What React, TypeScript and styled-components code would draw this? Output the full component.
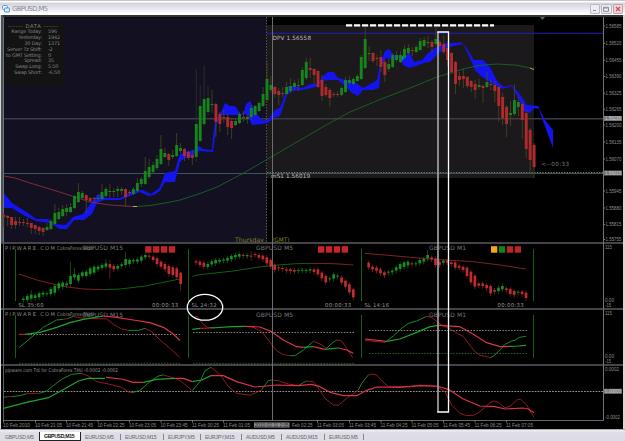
import styled, { createGlobalStyle } from 'styled-components';

const GlobalStyle = createGlobalStyle`
  * {
    box-sizing: border-box;
  }

  body {
    margin: 0;
    overflow: hidden;
    background-color: #dddce4;
    font-family: 'DejaVu Sans', sans-serif;
  }
`;

const Window = styled.div`
  display: flex;
  flex-direction: column;
  width: 625px;
  height: 441px;
  overflow: hidden;
`;

const TitleBar = styled.header`
  display: flex;
  align-items: center;
  height: 15px;
  padding: 1px 2px 0;
  border-top: 1px solid #c6c3ca;
  background: linear-gradient(#fff 0 1px, #d3d3df 2px, #e4e4eb 7px, #fdfdff 12px, #fff);
`;

const Title = styled.h1`
  flex: 1;
  margin: 0 0 0 2px;
  color: #8b8b8d;
  font: 6.8px 'DejaVu Sans', sans-serif;
  letter-spacing: -0.6px;
`;

const WindowButtons = styled.div`
  display: flex;
  gap: 1px;
`;

const WindowButton = styled.button<{ $close?: boolean }>`
  display: grid;
  place-items: center;
  width: 10.5px;
  height: 10px;
  padding: 0;
  border: 1px solid ${(props) => (props.$close ? '#c99ba4' : '#b9b9c6')};
  border-radius: 1px;
  color: ${(props) => (props.$close ? '#c0505c' : '#8c8c99')};
  background-color: ${(props) => (props.$close ? '#efd5da' : '#ececf2')};
`;

const Workspace = styled.main`
  position: relative;
  display: flex;
  flex-direction: column;
  height: 414px;
  border: solid #d6d5da;
  border-width: 0 2px 0 1px;
  background-color: #000;
`;

const Pane = styled.svg`
  display: block;
  flex: none;
  width: 622px;
`;

const Annotations = styled.svg`
  position: absolute;
  top: 0;
  left: 0;
  width: 622px;
  height: 414px;
`;

const DataBox = styled.section`
  position: absolute;
  top: 8px;
  left: 4px;
  width: 59px;
  height: 63px;
  color: #858583;
  background-color: #131313;
  font-size: 4.9px;
  line-height: 5.9px;
  letter-spacing: -0.15px;
`;

const DataTitle = styled.h2`
  margin: 0 0 0 3px;
  font-size: 5.2px;
  font-weight: 400;
  line-height: 6px;
  letter-spacing: 0.65px;
  white-space: nowrap;
`;

const DataRow = styled.div`
  display: grid;
  grid-template-columns: 37px 1fr;
  column-gap: 6px;
  height: 5.9px;
  white-space: nowrap;

  span:first-child {
    justify-self: end;
  }
`;

const TabBar = styled.nav`
  display: flex;
  height: 12px;
  padding: 2px 0 1px 3px;
  border-top: 1px solid #aaa9ad;
  background: linear-gradient(#eeedf2, #dedde5 3px);
`;

const Tab = styled.div<{ $width: number; $active?: boolean; $plain?: boolean }>`
  display: flex;
  align-items: center;
  justify-content: space-between;
  width: ${(props) => props.$width}px;
  height: 9px;
  padding-left: ${(props) => (props.$plain ? 2 : 4)}px;
  border: ${(props) => (props.$active ? '1px solid #222' : 'none')};
  border-top: none;
  color: ${(props) => (props.$active ? '#111' : '#656467')};
  background-color: ${(props) => (props.$active ? '#fff' : 'transparent')};
  font-family: 'Liberation Sans', sans-serif;
  font-size: 5.2px;
  font-weight: ${(props) => (props.$active ? 700 : 400)};
  letter-spacing: ${(props) => (props.$active ? '-0.35px' : '-0.2px')};
  white-space: nowrap;

  &::after {
    content: '';
    width: 1px;
    height: 6px;
    background-color: ${(props) => (props.$plain || props.$active ? 'transparent' : '#858489')};
  }
`;

const dataRows = [
  ['Range Today:', '596'],
  ['Yesterday:', '1942'],
  ['30 Day:', '1371'],
  ['Server Tz Shift:', '-2'],
  ['to GMT Setting:', '0'],
  ['Spread:', '35'],
  ['Swap Long:', '5.50'],
  ['Swap Short:', '-6.50']
];

const tabs = [
  { name: 'GBPUSD,M5', width: 36, plain: true },
  { name: 'GBPUSD,M15', width: 42, active: true },
  { name: 'EURUSD,M5', width: 40 },
  { name: 'EURUSD,M15', width: 43 },
  { name: 'EURJPY,M5', width: 37 },
  { name: 'EURJPY,M15', width: 41 },
  { name: 'AUDUSD,M5', width: 40 },
  { name: 'AUDUSD,M15', width: 43 },
  { name: 'EURUSD,M5', width: 39 }
];

const UP = '#16851b';
const DOWN = '#b02a2d';
const GREEN = '#20a32a';
const RED = '#b01e22';
const CRIMSON = '#d8354a';

// direction, high, top, bottom, low
type Bar = [number, number, number, number, number];

const mainBars: Bar[] = [
  [0, 213, 215, 217, 227], [0, 215, 216, 218, 226], [0, 217, 217, 225, 229], [0, 217, 221, 225, 229],
  [0, 217, 222, 223, 226], [0, 219, 222, 223, 226], [0, 218, 223, 224, 227], [0, 223, 223, 228, 234],
  [0, 225, 225, 229, 234], [0, 226, 227, 231, 235], [0, 227, 228, 232, 236], [1, 223, 227, 230, 231],
  [1, 219, 221, 229, 230], [1, 204, 213, 224, 225], [1, 208, 212, 219, 220], [1, 205, 209, 216, 217],
  [1, 204, 208, 212, 216], [1, 203, 207, 212, 213], [1, 195, 196, 208, 209], [1, 183, 192, 202, 203],
  [1, 191, 193, 198, 199], [0, 195, 195, 200, 213], [0, 197, 198, 201, 202], [0, 197, 198, 199, 202],
  [1, 194, 198, 199, 200], [1, 184, 192, 199, 200], [1, 187, 189, 196, 197], [1, 184, 191, 192, 198],
  [1, 188, 191, 192, 197], [1, 186, 189, 191, 197], [1, 187, 189, 191, 195], [0, 188, 189, 197, 207],
  [0, 190, 192, 193, 196], [1, 187, 189, 194, 195], [1, 178, 183, 191, 192], [1, 177, 179, 184, 187],
  [1, 157, 171, 184, 185], [1, 159, 167, 177, 179], [1, 162, 165, 172, 173], [1, 155, 159, 168, 170],
  [1, 135, 149, 164, 165], [1, 148, 153, 157, 158], [0, 153, 154, 160, 166], [1, 150, 155, 157, 159],
  [1, 133, 145, 156, 157], [1, 143, 148, 151, 153], [0, 148, 149, 156, 161], [0, 151, 152, 158, 160],
  [0, 150, 155, 158, 165], [1, 69, 124, 157, 162], [1, 85, 106, 141, 142], [1, 65, 99, 124, 126],
  [1, 86, 98, 112, 115], [1, 90, 104, 105, 113], [0, 103, 104, 122, 137], [0, 112, 114, 124, 132],
  [0, 110, 117, 118, 123], [0, 114, 117, 127, 135], [0, 119, 121, 128, 139], [1, 119, 121, 125, 126],
  [1, 112, 114, 123, 124], [0, 111, 117, 118, 122], [1, 114, 117, 119, 124], [1, 105, 108, 117, 120],
  [1, 105, 106, 115, 116], [1, 101, 103, 111, 112], [1, 87, 94, 106, 107], [1, 62, 79, 100, 101],
  [1, 76, 85, 90, 92], [0, 86, 87, 94, 97], [0, 88, 91, 95, 105], [0, 87, 93, 94, 97],
  [1, 82, 87, 94, 95], [1, 78, 86, 91, 93], [1, 80, 83, 87, 90], [1, 79, 85, 86, 91],
  [1, 67, 70, 85, 86], [1, 58, 62, 78, 80], [0, 58, 68, 70, 78], [0, 68, 69, 75, 84],
  [0, 70, 71, 87, 88], [0, 75, 80, 96, 101], [0, 84, 87, 95, 97], [0, 88, 90, 98, 107],
  [0, 92, 94, 95, 97], [0, 91, 94, 95, 97], [1, 86, 88, 95, 96], [1, 77, 80, 92, 93],
  [1, 76, 80, 83, 85], [1, 77, 79, 84, 85], [1, 74, 76, 81, 82], [1, 55, 57, 79, 80],
  [1, 27, 39, 68, 69], [1, 46, 53, 54, 61], [0, 52, 53, 61, 63], [0, 55, 58, 59, 66],
  [0, 50, 57, 67, 72], [0, 60, 62, 75, 82], [1, 59, 64, 69, 72], [1, 53, 55, 67, 68],
  [1, 51, 55, 60, 62], [1, 51, 55, 62, 63], [1, 45, 49, 58, 59], [1, 44, 48, 53, 55],
  [0, 47, 50, 51, 56], [1, 45, 47, 52, 53], [1, 38, 41, 50, 51], [1, 37, 40, 46, 47],
  [1, 36, 42, 43, 48], [0, 40, 42, 47, 53], [1, 27, 39, 44, 46], [0, 40, 42, 46, 50],
  [0, 35, 44, 52, 54], [0, 41, 48, 60, 66], [0, 52, 53, 72, 74], [0, 61, 62, 84, 94],
  [0, 72, 76, 80, 86], [0, 68, 76, 79, 88], [0, 76, 77, 86, 88], [0, 80, 81, 87, 92],
  [0, 80, 84, 90, 99], [1, 79, 85, 87, 89], [0, 84, 86, 88, 103], [1, 72, 82, 87, 88],
  [0, 80, 84, 85, 90], [0, 81, 85, 91, 102], [0, 85, 87, 106, 122], [0, 93, 97, 118, 125],
  [0, 105, 107, 124, 137], [1, 101, 113, 115, 126], [1, 84, 100, 114, 116], [1, 97, 102, 107, 116],
  [0, 102, 104, 120, 139], [0, 110, 113, 149, 158], [0, 128, 130, 160, 172], [0, 143, 145, 167, 178]
];

const cloud =
  '4,193 12,203 20,208 28,213 36,219 48,219 54,224 66,225 73,217 83,214 91,203 97,195 101,194 106,198 120,198 132,191 143,190 151,194 158,189 160,187 165,173 175,171 178,160 180,154 188,151 194,150 199,146 203,149 212,150 213,136 215,122 222,110 225,103 230,106 234,106 237,108 240,115 244,112 246,104 250,101 253,107 257,114 262,120 268,120 275,110 280,108 288,86 294,86 302,88 311,84 318,84 322,77 328,72 334,72 338,78 347,80 355,82 363,88 374,82 377,80 380,64 385,51 389,49 394,55 403,56 410,53 414,62 422,60 428,53 435,48 445,43 456,43 461,42 466,47 474,60 483,60 490,67 497,81 504,87 512,85 519,93 527,105 538,106 545,120 553,130 553,148 543,121 539,109 534,108 530,113 524,111 520,102 512,86 503,89 491,83 481,76 475,70 470,58 463,44 450,47 440,52 434,58 430,62 424,63 416,66 409,68 403,65 400,58 393,60 386,58 381,67 379,88 373,90 363,90 358,96 352,93 347,88 338,80 330,80 322,81 316,87 302,90 292,91 287,95 280,116 274,118 268,123 262,124 252,125 247,114 240,115 222,115 217,122 213,152 199,151 191,157 185,158 180,162 175,182 165,182 160,191 154,195 148,196 140,192 130,196 120,200 104,200 97,203 92,214 84,220 74,220 67,229 60,229 50,223 36,221 27,217 18,212 12,208 4,208';

const SERIES_STEP = 11.8;

// Indicator bars are kept in plot units, three to a pixel: direction, top, bottom, high, low
type MiniBar = [number, number, number, number?, number?];

const m15Bars: MiniBar[] = [
  [1, 176, 180], [1, 168, 180], [1, 164, 176, 150], [1, 166, 174], [1, 160, 172], [1, 158, 164], [1, 160, 162],
  [1, 147, 162], [1, 138, 158], [1, 130, 145], [1, 128, 140], [1, 130, 136], [1, 108, 132, 65], [1, 103, 112, 85],
  [1, 105, 122], [1, 97, 108], [1, 95, 108], [1, 85, 102], [1, 80, 98], [1, 80, 88], [1, 75, 84],
  [1, 70, 80, 58], [0, 72, 83, 60, 115], [0, 78, 88], [1, 78, 86], [1, 73, 78], [1, 57, 75, 36], [1, 60, 72],
  [1, 60, 64], [1, 58, 65], [1, 50, 62], [1, 45, 52], [0, 47, 50], [0, 50, 60], [0, 55, 72], [0, 65, 80],
  [0, 72, 88], [0, 78, 102], [0, 82, 105], [0, 85, 112], [0, 98, 132, 96, 152]
];

const m5Bars: MiniBar[] = [
  [0, 64, 68], [0, 65, 75], [0, 68, 80], [1, 72, 81], [1, 64, 73], [1, 60, 70], [1, 60, 65], [1, 58, 62],
  [1, 54, 62], [1, 48, 58], [1, 45, 52], [1, 42, 50, 35], [0, 45, 48], [1, 45, 49], [0, 47, 49, 34, 62],
  [0, 42, 45], [0, 45, 53], [0, 47, 58], [0, 52, 70], [0, 60, 80], [0, 74, 90], [0, 82, 85], [0, 84, 87],
  [0, 88, 92], [0, 88, 93], [0, 90, 95], [1, 90, 93], [1, 89, 92], [1, 90, 92], [1, 88, 92], [0, 88, 96],
  [0, 88, 103], [0, 98, 115], [0, 108, 127], [1, 115, 118], [1, 103, 116], [1, 107, 110], [0, 112, 128],
  [0, 122, 140], [0, 133, 157], [0, 148, 172]
];

const m1Bars: MiniBar[] = [
  [0, 68, 82], [0, 80, 88], [0, 83, 92], [0, 88, 100], [0, 97, 106], [1, 95, 98], [1, 92, 97], [1, 82, 92],
  [1, 72, 87], [1, 67, 81], [1, 65, 76], [0, 70, 72], [1, 70, 72], [1, 60, 70],
  [1, 57, 65], [1, 45, 55, 30], [0, 52, 58], [0, 55, 75], [0, 65, 75], [1, 62, 68], [0, 62, 68], [0, 67, 72],
  [0, 67, 83], [0, 77, 83], [0, 80, 90], [0, 83, 108], [0, 95, 127], [0, 107, 140], [0, 130, 137], [0, 130, 138],
  [0, 135, 145], [0, 138, 160], [0, 150, 155], [1, 143, 153], [1, 138, 148], [0, 145, 150], [0, 147, 162],
  [0, 153, 165], [1, 155, 158], [0, 155, 162], [0, 158, 174]
];

type Stroke = [string, string];

const averages: Stroke[] = [
  ['#98282a', '57,102 110,120 170,135 210,142 250,147 310,149'],
  ['#17701b', '310,149 360,147 430,139 500,125 540,117'],
  ['#17701b', '577,109 600,104 700,93 770,82 820,76 890,71 930,70'],
  ['#98282a', '930,70 1000,71 1060,75'],
  ['#98282a', '1095,40 1200,49 1300,58 1420,65 1500,75 1578,87']
];

const fastLines: Stroke[] = [
  [GREEN, '57,323 85,300 110,278 130,262 170,240 190,238'],
  [RED, '190,238 202,236'],
  [GREEN, '202,236 220,229'],
  [RED, '220,229 245,234 320,237 345,256 365,267 385,271'],
  [GREEN, '385,271 415,271 435,265'],
  [RED, '435,265 455,275 480,300 510,325 540,353'],
  [RED, '585,228 595,232 607,250 622,262 645,264'],
  [RED, '755,260 785,275 805,300 830,332 850,344 870,347'],
  [GREEN, '870,347 885,347 910,330 940,304'],
  [RED, '940,304 960,312 980,325'],
  [GREEN, '980,325 995,310 1010,300'],
  [RED, '1010,300 1025,303 1040,325 1058,353'],
  [RED, '1095,301 1125,304 1155,307'],
  [GREEN, '1155,307 1180,288 1205,265 1225,250 1250,243 1280,229'],
  [RED, '1280,229 1295,232 1320,252 1350,267 1390,290 1425,335 1440,346 1472,353'],
  [GREEN, '1472,353 1482,347 1500,330 1515,313 1535,303 1545,301 1558,292 1578,289']
];

const slowLines: Stroke[] = [
  [RED, '57,283 75,283'],
  [GREEN, '75,283 120,277 170,262 210,248 250,238 310,228'],
  [CRIMSON, '310,228 350,232 400,240 450,248 490,262 520,282 540,302'],
  [GREEN, '577,268 600,265'],
  [RED, '600,265 630,264'],
  [GREEN, '630,264 700,260 735,259'],
  [CRIMSON, '735,259 780,261 815,275 850,300 890,320 910,322'],
  [GREEN, '910,322 940,320'],
  [CRIMSON, '940,320 975,328'],
  [GREEN, '975,328 1015,324'],
  [CRIMSON, '1015,324 1040,330 1060,340'],
  [CRIMSON, '1095,297 1160,304'],
  [GREEN, '1160,304 1200,297 1250,277 1290,260 1315,256'],
  [CRIMSON, '1315,256 1380,260 1420,283 1460,308 1500,320 1530,319'],
  [GREEN, '1530,319 1555,318 1578,316']
];

const tdiFast: Stroke[] = [
  [GREEN, '10,127 22,125'],
  [RED, '22,125 35,125'],
  [GREEN, '35,125 60,122 80,116'],
  [RED, '80,115 118,115'],
  [GREEN, '118,115 140,108 160,92 185,73 215,58 245,55'],
  [RED, '245,55 265,63 290,80 330,88 365,97 385,111 397,113'],
  [GREEN, '397,113 420,106 450,80 475,63 490,60'],
  [RED, '490,60 525,70 545,80 577,107'],
  [GREEN, '577,107 600,80 615,47 633,37'],
  [RED, '633,37 660,58 685,95 710,115 750,121 785,105'],
  [GREEN, '785,105 790,97 805,77 815,75'],
  [RED, '815,75 835,77 865,87 895,92'],
  [GREEN, '895,92 910,83 920,78'],
  [RED, '920,78 940,80 950,92 975,130 1000,150 1015,151 1040,130 1075,105'],
  [GREEN, '1075,105 1085,85 1105,60'],
  [RED, '1105,60 1115,57 1130,60 1150,82 1165,94 1230,95 1260,90 1310,95 1335,110 1355,150 1380,175 1400,182 1420,181 1440,170 1470,143 1482,138 1495,142 1515,158 1530,154 1550,135 1562,133 1580,150 1602,187']
];

const tdiSlow: Stroke[] = [
  [GREEN, '10,160 80,142 145,128 200,98 235,78 265,70 315,70'],
  [CRIMSON, '318,67 365,72 400,82 430,82'],
  [GREEN, '430,82 470,73 525,70'],
  [CRIMSON, '525,70 550,70 577,80'],
  [GREEN, '577,80 605,75 633,62'],
  [CRIMSON, '633,62 670,62 710,80 765,96 800,93 830,90 895,92 935,88 960,95 990,112 1030,122 1070,122 1100,106 1130,96 1200,97 1260,92 1310,93 1345,103 1390,132 1440,153 1485,155 1515,162 1570,159 1585,162 1602,173']
];

const prices: [number, string][] = [
  [26, '1.56585'], [43.3, '1.56520'], [60.3, '1.56455'], [76.5, '1.56390'], [93.3, '1.56325'],
  [109.3, '1.56265'], [125, '1.56200'], [142, '1.56135'], [159, '1.56070'], [191, '1.55945'],
  [208, '1.55880'], [224.5, '1.55815'], [239.5, '1.55755']
];

const times: [number, string][] = [
  [3, '10 Feb 2010'], [35, '10 Feb 21:05'], [66, '10 Feb 21:45'], [97.5, '10 Feb 22:25'],
  [129, '10 Feb 23:05'], [160.5, '10 Feb 23:45'], [192, '11 Feb 00:25'], [223, '11 Feb 01:05'],
  [317, '11 Feb 03:05'], [349, '11 Feb 03:45'], [380.5, '11 Feb 04:25'], [411.5, '11 Feb 05:05'],
  [443, '11 Feb 05:45'], [474.5, '11 Feb 06:25'], [506, '11 Feb 07:05']
];

const SmallText = styled.text<{ $size?: number; $color?: string }>`
  fill: ${(props) => props.$color ?? '#8d8d8d'};
  font-family: ${(props) => (props.$size ? "'DejaVu Sans'" : "'Liberation Sans'")}, sans-serif;
  font-size: ${(props) => props.$size ?? 4.8}px;
`;

interface LabelProps {
  x: number;
  y: number;
  width: number;
  text: string;
  size?: number;
  color?: string;
  spaced?: boolean;
}

function Label({ x, y, width, text, size, color, spaced }: LabelProps) {
  return (
    <SmallText
      x={x}
      y={y}
      textLength={width}
      lengthAdjust={spaced ? 'spacing' : 'spacingAndGlyphs'}
      $size={size}
      $color={color}
    >
      {text}
    </SmallText>
  );
}

function PriceTag({ y, text }: { y: number; text: string }) {
  return (
    <>
      <rect x="604" y={y - 2.5} width="18" height="5" fill="#77777a" />
      <Label x={605} y={y + 1.8} width={16} text={text} color="#d2d2d2" />
    </>
  );
}

function Lines({ data, width }: { data: Stroke[]; width: number }) {
  return (
    <>
      {data.map(([color, points]) => (
        <polyline key={points} points={points} fill="none" stroke={color} strokeWidth={width} strokeLinejoin="round" />
      ))}
    </>
  );
}

function MiniCandles({ data, start }: { data: MiniBar[]; start: number }) {
  return (
    <>
      {data.map(([up, top, bottom, high = top - 6, low = bottom + 8], i) => {
        const x = start + i * SERIES_STEP;
        const color = up ? '#189020' : '#c02c30';
        return (
          <g key={i} fill={color}>
            <rect x={x - 1.2} y={high} width="2.4" height={low - high} opacity="0.65" />
            <rect x={x - 4} y={top} width="8" height={Math.max(bottom - top, 3)} />
          </g>
        );
      })}
    </>
  );
}

function MainChart() {
  return (
    <Pane viewBox="1 15 622 227" height="227">
      <rect x="1" y="15" width="622" height="2" fill="#303632" />
      <rect x="1" y="15" width="2" height="227" fill="#4b5050" />
      <rect x="4" y="17.5" width="262.5" height="224.5" fill="#121021" />
      <rect x="267" y="25" width="267" height="153" fill="#1b191c" />
      <path d="M3.5 17V242" stroke="#6d7378" />
      <path d="M4 118.7H603" stroke="#3d3b44" strokeWidth="1.6" />
      <path d="M4 173.5H603" stroke="#3c5558" />
      <path d="M267 172.5H603" stroke="#6b8560" strokeDasharray="1.3 1.4" />
      <path d="M266.5 17V242" stroke="#5f5b39" strokeDasharray="1.6 1.3" />
      <path d="M267 33.3H603" stroke="#2121b8" strokeWidth="1.1" />
      <polygon points={cloud} fill="#1414ee" />
      <path d="M401 56h2.5v4h-2.5z" fill="#1677d4" />
      <Lines
        width={0.9}
        data={[
          ['#8d2f39', '4,176 15,178 30,183 50,189 75,197 90,202 110,205 133,206.5'],
          ['#c9c34a', '133,206.5 137,206.5'],
          ['#1a6423', '137,206.5 150,205.5 165,203 180,200 200,193.5 217,187 240,175 266,160 290,146 327,124.5 350,112 380,99.5 410,88 437,77 467,68 480,65.3 497,64 517,65.2 530,68'],
          ['#c9c34a', '530,68 534,69.6']
        ]}
      />
      {mainBars.map(([up, high, top, bottom, low], i) => {
        const x = 3.8 + i * 3.928;
        return (
          <g key={i}>
            <path d={`M${x} ${high}V${low}`} stroke={i > 48 && i < 53 ? '#30322d' : '#4b4720'} strokeWidth="0.8" />
            <rect x={x - 1.45} y={top} width="2.9" height={bottom - top} fill={up ? UP : DOWN} />
          </g>
        );
      })}
      <path d="M346 25.3H494" stroke="#fff" strokeWidth="2.3" strokeDasharray="6.2 1.8" />
      <path d="M540 17h5l-2.5 3z" fill="#456a69" />
      <Label x={272.5} y={39.5} width={38.5} text="DPV  1.56558" size={5.7} color="#bfbfbf" spaced />
      <Label x={271} y={178} width={39} text="mS1  1.56019" size={5.7} color="#bfbfbf" spaced />
      <Label x={541.5} y={166} width={27.5} text="<--00:33" size={5.7} color="#777" spaced />
      <Label x={235} y={241.5} width={29} text="Thursday" size={6.1} color="#86832d" />
      <Label x={272} y={241.5} width={17.5} text="(GMT)" size={6.1} color="#86832d" />
      <path d="M603.5 17V242" stroke="#747474" />
      {prices.map(([y, text]) => (
        <g key={text}>
          <path d={`M604 ${y}h1.2`} stroke="#777" />
          <Label x={605.5} y={y + 1.8} width={16} text={text} />
        </g>
      ))}
      <PriceTag y={118.5} text="1.56236" />
      <PriceTag y={173} text="1.56015" />
    </Pane>
  );
}

function PaneFrame({ top, bottom }: { top: number; bottom: number }) {
  return (
    <>
      <path d={`M1 ${top + 1}H623`} stroke="#5c5b5e" strokeWidth="1.4" />
      <path d={`M3.5 ${top}V${bottom}`} stroke="#596163" />
      <path d={`M603.5 ${top}V${bottom}`} stroke="#747474" />
    </>
  );
}

function PaneTitles({ y }: { y: number }) {
  return (
    <>
      <Label x={5} y={y} width={50} text="PIPWARE.COM" size={5.2} color="#89898a" spaced />
      <Label x={57} y={y - 0.3} width={37} text="CobraForex Multi" size={5} color="#89898a" />
      <Label x={82} y={y + 0.5} width={41} text="GBPUSD M15" size={6} color="#77777a" spaced />
      <Label x={256} y={y + 0.5} width={37} text="GBPUSD M5" size={6} color="#77777a" spaced />
      <Label x={429} y={y + 0.5} width={37} text="GBPUSD M1" size={6} color="#77777a" spaced />
    </>
  );
}

function SignalSquares({ x, colors }: { x: number; colors: string[] }) {
  return (
    <>
      {colors.map((color, i) => (
        <rect key={i} x={x + i * 7.9} y="246.2" width="6.3" height="6.5" fill={color} />
      ))}
    </>
  );
}

function MiniChart() {
  return (
    <Pane viewBox="1 242 622 66" height="66">
      <PaneFrame top={242} bottom={308} />
      <path d="M15.5 249V301M188.5 249V301M361.5 249V301M533.5 249V301" stroke="#175f18" />
      <PaneTitles y={249.8} />
      <g transform="translate(0 240) scale(0.33333)">
        <Lines data={averages} width={2.5} />
        <MiniCandles data={m15Bars} start={70} />
        <MiniCandles data={m5Bars} start={588} />
        <MiniCandles data={m1Bars} start={1106} />
      </g>
      <SignalSquares x={145.2} colors={['#b92629', '#b92629', '#b92629', '#b92629']} />
      <SignalSquares x={318} colors={['#c72628', '#c72628', '#c72628', '#c72628']} />
      <SignalSquares x={491} colors={['#f8a31c', '#118713', '#b92629', '#b92629']} />
      <Label x={18.5} y={307.3} width={25} text="SL 35:60" size={5.3} color="#999" spaced />
      <Label x={152} y={307.3} width={26} text="00:00:33" size={5.3} color="#999" spaced />
      <Label x={191.5} y={307.3} width={25} text="SL 24:32" size={5.3} color="#999" spaced />
      <Label x={325} y={307.3} width={26} text="00:00:33" size={5.3} color="#999" spaced />
      <Label x={364.5} y={307.3} width={24.5} text="SL 14:16" size={5.3} color="#999" spaced />
      <Label x={497.5} y={307.3} width={26} text="00:00:33" size={5.3} color="#999" spaced />
      <Label x={605} y={248.5} width={7} text="115" />
      <Label x={605} y={302} width={9} text="0.00" />
      <Label x={605} y={306.6} width={6} text="-15" />
    </Pane>
  );
}

function Oscillator() {
  return (
    <Pane viewBox="1 308 622 56" height="56">
      <PaneFrame top={308} bottom={364} />
      <path d="M15.5 315V358M188.5 315V358M361.5 315V358M533.5 315V358" stroke="#175f18" />
      <path d="M19 334.5H181M193 332.5H354M369 330.5H527" stroke="#878787" strokeDasharray="1.5 1.4" />
      <path d="M19 363.3H181M193 363.3H354M369 353.5H527" stroke="#255e25" strokeDasharray="1.5 1.4" />
      <PaneTitles y={316} />
      <g transform="translate(0 240) scale(0.33333)">
        <Lines data={fastLines} width={2.5} />
        <Lines data={slowLines} width={3.6} />
      </g>
      <Label x={605} y={315} width={7} text="115" />
      <Label x={605} y={358.4} width={9} text="0.00" />
      <Label x={605} y={362.8} width={6} text="-15" />
    </Pane>
  );
}

function TdiChart() {
  return (
    <Pane viewBox="1 364 622 65" height="65">
      <PaneFrame top={364} bottom={420} />
      <path d="M4 391.5H603" stroke="#949494" strokeDasharray="1.7 1.2" />
      <g transform="translate(0 355) scale(0.33333)">
        <Lines data={tdiFast} width={2.5} />
        <Lines data={tdiSlow} width={3.6} />
      </g>
      <Label x={5} y={372} width={113} text="pipware.com Tdi for CobraForex THU  -0.0002 -0.0002" size={5} color="#969696" />
      <path d="M3 420.5H604" stroke="#68686a" />
      {times.map(([x, text]) => (
        <g key={text}>
          <path d={`M${x + 0.5} 420v2.5`} stroke="#777" />
          <Label x={x} y={426.8} width={27} text={text} />
        </g>
      ))}
      <rect x="254" y="422.5" width="35.5" height="5" fill="#88888a" />
      <Label x={254.7} y={426.8} width={34} text="2010.02.11 2:05" color="#262626" />
      <Label x={292} y={426.8} width={20.5} text="Feb 02:25" />
      <Label x={605} y={370.8} width={14} text="0.0002" />
      <PriceTag y={391.3} text="0.00000" />
      <Label x={605} y={418.8} width={15} text="-0.0002" />
    </Pane>
  );
}

function App() {
  return (
    <Window>
      <GlobalStyle />
      <TitleBar>
        <svg width="8" height="8" viewBox="0 0 8 8">
          <rect x="0.5" y="0.5" width="5" height="4" rx="1" fill="#edf6ff" stroke="#5e9bd3" />
          <rect x="2.5" y="3" width="5" height="4" rx="0.5" fill="#dceeff" stroke="#5792cb" />
        </svg>
        <Title>GBPUSD,M5</Title>
        <WindowButtons>
          <WindowButton aria-label="Minimize">
            <svg width="6" height="6" viewBox="0 0 6 6">
              <path d="M1 4.5h3" stroke="currentColor" />
            </svg>
          </WindowButton>
          <WindowButton aria-label="Maximize">
            <svg width="6" height="6" viewBox="0 0 6 6">
              <path d="M.5 1.3h5v4h-5zM.5 2h5" fill="none" stroke="currentColor" />
            </svg>
          </WindowButton>
          <WindowButton aria-label="Close" $close>
            <svg width="6" height="6" viewBox="0 0 6 6">
              <path d="M1 1l4 4M5 1L1 5" stroke="currentColor" strokeWidth="1.2" />
            </svg>
          </WindowButton>
        </WindowButtons>
      </TitleBar>
      <Workspace>
        <MainChart />
        <MiniChart />
        <Oscillator />
        <TdiChart />
        <DataBox>
          <DataTitle>------ DATA ------</DataTitle>
          {dataRows.map(([name, value]) => (
            <DataRow key={name}>
              <span>{name}</span>
              <span>{value}</span>
            </DataRow>
          ))}
        </DataBox>
        <Annotations viewBox="1 15 622 414">
          <path d="M272.5 17V420" stroke="#77777a" strokeWidth="0.9" />
          <path d="M438 412V32" stroke="#aaa" strokeWidth="1.6" />
          <path d="M437.2 32H448.5V412H437.2" fill="none" stroke="#fff" strokeWidth="1.3" />
          <ellipse cx="205" cy="307.3" rx="17.7" ry="12.9" fill="none" stroke="#fff" strokeWidth="1.3" />
        </Annotations>
      </Workspace>
      <TabBar>
        {tabs.map((tab, i) => (
          <Tab key={i} $width={tab.width} $active={tab.active} $plain={tab.plain}>
            {tab.name}
          </Tab>
        ))}
      </TabBar>
    </Window>
  );
}

export default App;
